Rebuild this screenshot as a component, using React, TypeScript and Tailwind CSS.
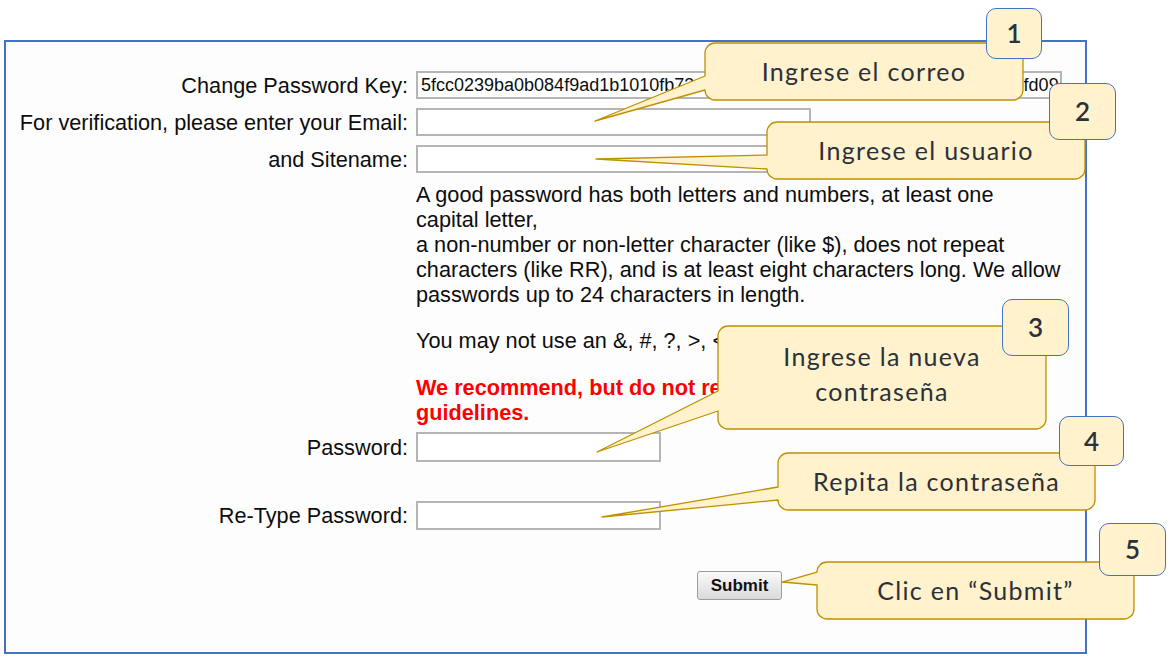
import React from "react";

type Callout = {
  x1: number;
  y1: number;
  x2: number;
  y2: number;
  ya: number;
  yb: number;
  tx: number;
  ty: number;
  cls: string;
  text: React.ReactNode;
};

function shape(c: Callout, r = 10) {
  const yb = Math.min(c.yb, c.y2 - r);
  const ya = Math.max(c.ya, c.y1 + r);
  return `M${c.x1 + r},${c.y1} H${c.x2 - r} A${r},${r} 0 0 1 ${c.x2},${c.y1 + r} V${c.y2 - r} A${r},${r} 0 0 1 ${c.x2 - r},${c.y2} H${c.x1 + r} A${r},${r} 0 0 1 ${c.x1},${c.y2 - r} V${yb} L${c.tx},${c.ty} L${c.x1},${ya} V${c.y1 + r} A${r},${r} 0 0 1 ${c.x1 + r},${c.y1} Z`;
}

const callouts: { c: Callout; badge: { cls: string; n: string } }[] = [
  {
    c: { x1: 705, y1: 43, x2: 1023, y2: 100, ya: 76, yb: 90, tx: 595, ty: 121, cls: "left-[705px] top-[43px] w-[318px] h-[57px]", text: "Ingrese el correo" },
    badge: { cls: "left-[986px] top-[8px] w-[56px] h-[51px]", n: "1" },
  },
  {
    c: { x1: 767, y1: 122, x2: 1085, y2: 179, ya: 155, yb: 170, tx: 596, ty: 159, cls: "left-[767px] top-[122px] w-[318px] h-[57px]", text: "Ingrese el usuario" },
    badge: { cls: "left-[1049px] top-[83px] w-[67px] h-[57px]", n: "2" },
  },
  {
    c: { x1: 718, y1: 326, x2: 1046, y2: 429, ya: 391, yb: 411, tx: 597, ty: 452, cls: "left-[718px] top-[326px] w-[328px] h-[103px] pb-[7px]", text: (<>Ingrese la nueva<br />contraseña</>) },
    badge: { cls: "left-[1002px] top-[299px] w-[67px] h-[57px]", n: "3" },
  },
  {
    c: { x1: 778, y1: 453, x2: 1095, y2: 510, ya: 487, yb: 500, tx: 602, ty: 517, cls: "left-[778px] top-[453px] w-[317px] h-[57px]", text: "Repita la contraseña" },
    badge: { cls: "left-[1059px] top-[416px] w-[65px] h-[50px]", n: "4" },
  },
  {
    c: { x1: 817, y1: 562, x2: 1134, y2: 619, ya: 572, yb: 585, tx: 782, ty: 582, cls: "left-[817px] top-[562px] w-[317px] h-[57px]", text: "Clic en \u201cSubmit\u201d" },
    badge: { cls: "left-[1099px] top-[523px] w-[67px] h-[53px]", n: "5" },
  },
];

const inputCls = "h-[28px] bg-white border-2 border-[#b5b5b5]";

export default function App() {
  return (
    <div className="relative w-[1171px] h-[664px] bg-white overflow-hidden font-['Liberation_Sans',Arial,sans-serif] text-[#0d0d0d]">
      <div className="ml-[4px] mt-[40px] w-[1083px] h-[614px] border-2 border-[#4472c4] bg-[#fdfdfd] pt-[29px]">
        <div className="grid grid-cols-[402px_auto] gap-x-[8px] text-[21.7px] leading-[25px]">
          <div className="text-right self-center whitespace-nowrap">Change Password Key:</div>
          <div className={`${inputCls} w-[646px] overflow-hidden whitespace-nowrap text-[18px] leading-[24px] pl-[3px]`}>
            5fcc0239ba0b084f9ad1b1010fb73e4a91d2b6807c5e2a9b41d83e6a0b5726fd09e1
          </div>

          <div className="text-right self-center whitespace-nowrap mt-[9px]">For verification, please enter your Email:</div>
          <div className={`${inputCls} w-[395px] mt-[9px]`} />

          <div className="text-right self-center whitespace-nowrap mt-[9px]">and Sitename:</div>
          <div className={`${inputCls} w-[395px] mt-[9px]`} />

          <div />
          <div className="mt-[9px] whitespace-nowrap">
            <p>A good password has both letters and numbers, at least one</p>
            <p>capital letter,</p>
            <p>a non-number or non-letter character (like $), does not repeat</p>
            <p>characters (like RR), and is at least eight characters long. We allow</p>
            <p>passwords up to 24 characters in length.</p>
            <p className="mt-[21px]">You may not use an &amp;, #, ?, &gt;, &lt; or % in a password.</p>
            <div className="mt-[22px] font-bold text-[#ff0000]">
              <p>We recommend, but do not require, these password</p>
              <p>guidelines.</p>
            </div>
          </div>

          <div className="text-right self-center whitespace-nowrap mt-[7px]">Password:</div>
          <div className={`${inputCls} h-[30px] w-[245px] mt-[7px]`} />

          <div className="text-right self-center whitespace-nowrap mt-[39px]">Re-Type Password:</div>
          <div className={`${inputCls} h-[29px] w-[245px] mt-[39px]`} />

          <div />
          <div className="mt-[41px]">
            <button className="ml-[281px] w-[85px] h-[29px] rounded-[3px] border border-[#9c9c9c] bg-linear-to-b from-[#fafafa] to-[#dadada] text-[17px] font-bold text-[#111] leading-none">
              Submit
            </button>
          </div>
        </div>
      </div>

      {callouts.map(({ c, badge }, i) => (
        <React.Fragment key={i}>
          <svg className="absolute left-0 top-0 pointer-events-none" width={1171} height={664}>
            <path d={shape(c)} fill="#fff2cc" stroke="#bf9000" strokeWidth={1.3} strokeLinejoin="round" />
          </svg>
          <div className={`absolute ${c.cls} flex items-center justify-center text-center font-['Lato',sans-serif] text-[25px] leading-[35px] tracking-[1.3px] text-[#2b313b]`}>
            <div>{c.text}</div>
          </div>
          <div className={`absolute ${badge.cls} rounded-[10px] border-[1.5px] border-[#4472c4] bg-[#fff2cc] flex items-center justify-center font-['Lato',sans-serif] font-semibold text-[26px] text-[#2b313b]`}>
            {badge.n}
          </div>
        </React.Fragment>
      ))}
    </div>
  );
}
